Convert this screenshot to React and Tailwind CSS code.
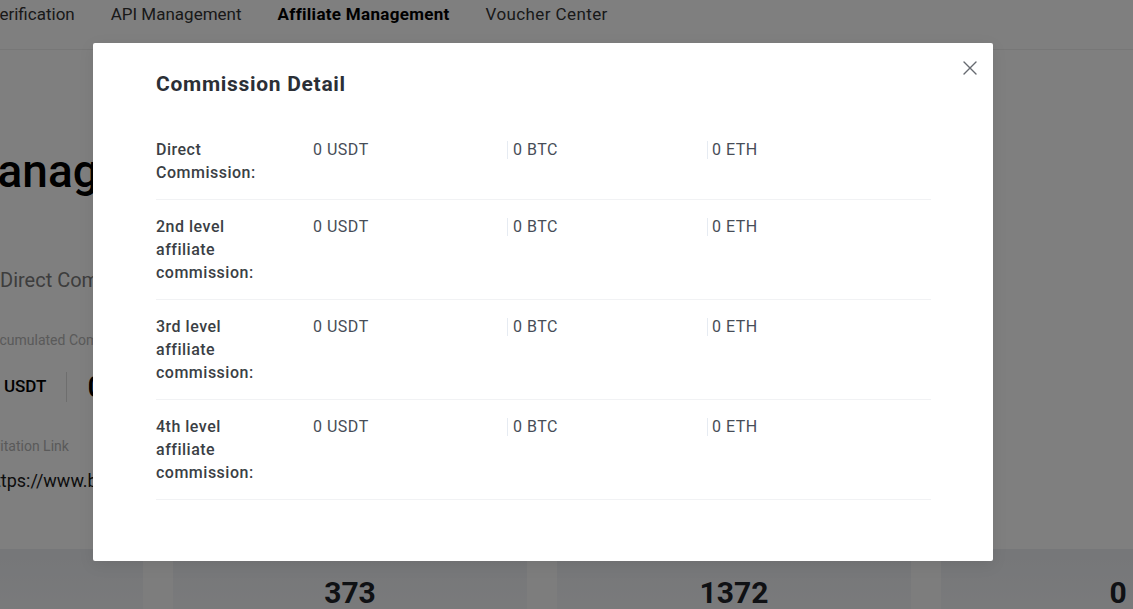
import React from "react";

function CloseIcon() {
  return (
    <svg width="14" height="14" viewBox="0 0 14 14" fill="none">
      <path d="M1 1L13 13M13 1L1 13" stroke="#666a70" strokeWidth="1.4" strokeLinecap="round" />
    </svg>
  );
}

const rows = [
  { label: "Direct Commission:" },
  { label: "2nd level affiliate commission:" },
  { label: "3rd level affiliate commission:" },
  { label: "4th level affiliate commission:" },
];

export default function App() {
  return (
    <div className="relative w-[1133px] h-[609px] overflow-hidden bg-white font-['Roboto','Noto_Sans',sans-serif]">
      {/* Background page */}
      <nav className="h-[50px] border-b border-[#efefef]">
        <div className="flex gap-[36px] pt-[3px] -ml-[11px] text-[17px] leading-[22px] text-[#333] whitespace-nowrap">
          <span>Verification</span>
          <span>API Management</span>
          <span className="font-bold text-black tracking-[0.3px]">Affiliate Management</span>
          <span className="tracking-[0.4px]">Voucher Center</span>
        </div>
      </nav>

      <div className="whitespace-nowrap">
        <div className="mt-[94px] -ml-[214px] text-[46px] leading-[54px] font-medium text-black">
          Affiliate Management
        </div>
        <div className="mt-[68px] text-[20px] leading-[28px] text-[#7a7a7a]">Direct Commission</div>
        <div className="mt-[36px] -ml-[17px] text-[14px] leading-[20px] text-[#b4b4b4]">
          Accumulated Commission
        </div>
        <div className="mt-[22px] -ml-[20px] flex items-center h-[30px] text-black">
          <span className="text-[28px] font-medium leading-[30px]">0</span>
          <span className="ml-[8px] text-[17px] font-medium">USDT</span>
          <span className="mx-[20px] h-[30px] w-px bg-[#dcdcdc]" />
          <span className="text-[30px] font-medium leading-[30px]">0</span>
          <span className="ml-[8px] text-[17px] font-medium">BTC</span>
        </div>
        <div className="mt-[34px] -ml-[18px] text-[14px] leading-[20px] text-[#b4b4b4]">Invitation Link</div>
        <div className="mt-[13px] -ml-[15px] text-[18px] leading-[24px] text-[#1a1a1a]">
          https://www.binance.com/en/register?ref=12345678
        </div>
      </div>

      <div className="mt-[56px] h-[80px] bg-[#fafafa] flex gap-[30px] -ml-[211px]">
        <div className="w-[354px] shrink-0 bg-gradient-to-b from-[#eceef2] to-[#f6f7f9]" />
        <div className="w-[354px] shrink-0 bg-gradient-to-b from-[#eceef2] to-[#f6f7f9] flex justify-center pt-[29px]">
          <span className="text-[30px] leading-[30px] font-bold text-[#1e2329]">373</span>
        </div>
        <div className="w-[354px] shrink-0 bg-gradient-to-b from-[#eceef2] to-[#f6f7f9] flex justify-center pt-[29px]">
          <span className="text-[30px] leading-[30px] font-bold text-[#1e2329]">1372</span>
        </div>
        <div className="w-[354px] shrink-0 bg-gradient-to-b from-[#eceef2] to-[#f6f7f9] flex justify-center pt-[29px]">
          <span className="text-[30px] leading-[30px] font-bold text-[#1e2329]">0</span>
        </div>
      </div>

      {/* Overlay */}
      <div className="absolute inset-0 bg-black/50">
        <div className="relative ml-[93px] mt-[43px] w-[900px] h-[518px] bg-white rounded-[2px] shadow-[0_4px_16px_rgba(0,0,0,0.08)] px-[63px] pt-[27px]">
          <button className="absolute right-[16px] top-[18px] w-[14px] h-[14px] flex items-center justify-center">
            <CloseIcon />
          </button>
          <h2 className="text-[21px] leading-[28px] font-bold text-[#2b2f36] tracking-[0.7px]">Commission Detail</h2>
          <div className="mt-[25px] w-[775px]">
            {rows.map((r) => (
              <div key={r.label} className="flex border-b border-[#f1f2f4] py-[15px] text-[16px]">
                <div className="w-[157px] pr-[40px] font-medium leading-[23px] tracking-[0.5px] text-[#3b3f45]">{r.label}</div>
                <div className="w-[194px] leading-[23px] tracking-[0.5px] text-[#474d57]">0 USDT</div>
                <div className="w-[200px]">
                  <div className="mt-[3px] h-[18px] border-l border-[#e6ebf2] pl-[5px] leading-[18px] tracking-[0.5px] text-[#474d57]">0 BTC</div>
                </div>
                <div className="flex-1">
                  <div className="mt-[3px] h-[18px] border-l border-[#e6ebf2] pl-[4px] leading-[18px] tracking-[0.5px] text-[#474d57]">0 ETH</div>
                </div>
              </div>
            ))}
          </div>
        </div>
      </div>
    </div>
  );
}
